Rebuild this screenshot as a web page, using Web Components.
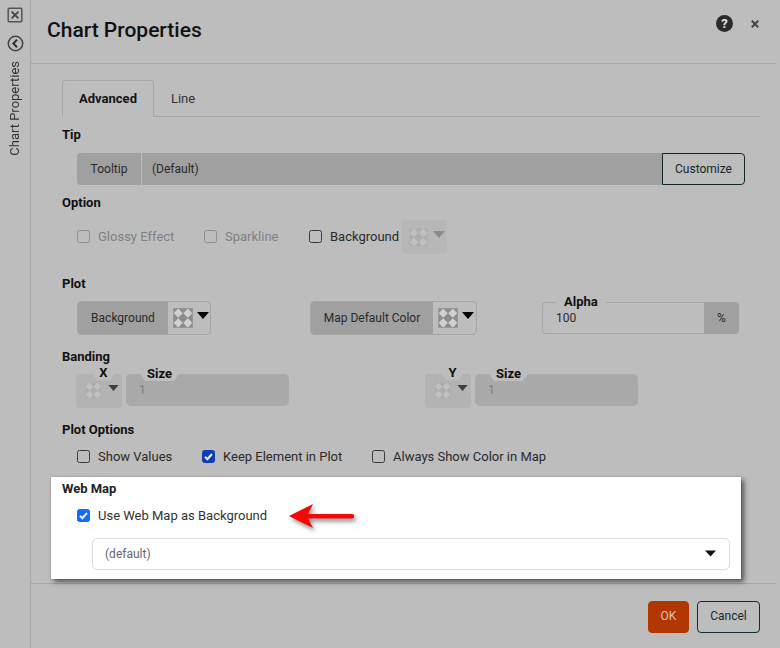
<!DOCTYPE html>
<html><head><meta charset="utf-8"><title>Chart Properties</title>
<style>
html,body{margin:0;padding:0;background:#bdbdbd;overflow:hidden}
body{font:13px Roboto,sans-serif;color:#222;width:780px;height:648px}
</style></head><body>
<x-app>
  <x-sidebar slot="side">Chart Properties</x-sidebar>
  <x-header>Chart Properties</x-header>
  <x-tabs></x-tabs>
  <x-label gap="7">Tip</x-label>
  <x-row gap="9" h="32">
    <x-tipgroup></x-tipgroup>
  </x-row>
  <x-label gap="7">Option</x-label>
  <x-row gap="8" h="34">
    <x-check disabled w="127" style="margin-bottom:2px">Glossy Effect</x-check>
    <x-check disabled w="105" style="margin-bottom:2px">Sparkline</x-check>
    <x-check w="93" style="margin-bottom:2px">Background</x-check>
    <x-swatch disabled></x-swatch>
  </x-row>
  <x-label gap="19">Plot</x-label>
  <x-row gap="8" h="34">
    <x-colorgroup w="134" addon="90">Background</x-colorgroup>
    <x-colorgroup w="167" addon="122" style="margin-left:99px">Map Default Color</x-colorgroup>
    <x-alpha style="margin-left:65px"></x-alpha>
  </x-row>
  <x-label gap="11">Banding</x-label>
  <x-row gap="8" h="34" flush>
    <x-bandswatch>X</x-bandswatch>
    <x-sizefield></x-sizefield>
    <x-bandswatch style="margin-left:136px">Y</x-bandswatch>
    <x-sizefield></x-sizefield>
  </x-row>
  <x-label gap="11">Plot Options</x-label>
  <x-row gap="7" h="20">
    <x-check w="125">Show Values</x-check>
    <x-check checked w="170">Keep Element in Plot</x-check>
    <x-check>Always Show Color in Map</x-check>
  </x-row>
  <x-webmap></x-webmap>
  <x-footer></x-footer>
</x-app>
<script>
const define=(name,css,html,extra)=>{
  customElements.define(name,class extends HTMLElement{
    connectedCallback(){
      if(this.shadowRoot)return;
      const r=this.attachShadow({mode:'open'});
      r.innerHTML='<style>'+css+'</style>'+(typeof html==='function'?html(this):html);
      if(extra)extra(this,r);
    }
  });
};
const checker=(dim,size=20)=>`<svg width="${size}" height="${size}" viewBox="0 0 20 20" style="display:block;flex:none" aria-hidden="true"><rect width="20" height="20" fill="${dim?'#adadad':'#8c8c8c'}"/><g fill="${dim?'#c0c0c0':'#d0d0d0'}"><path d="M5.2.6 9.7 5.2 5.2 9.7.7 5.2zM14.8.6 19.3 5.2 14.8 9.7 10.3 5.2zM5.2 10.3 9.7 14.8 6 19H4.4L.7 14.8zM14.8 10.3 19.3 14.8 15.6 19H14L10.3 14.8z"/></g><rect x=".5" y=".5" width="19" height="19" fill="none" stroke="${dim?'#b3b3b3':'#979797'}"/></svg>`;
const caret=(c,w=12,h=7)=>`<svg width="${w}" height="${h}" viewBox="0 0 12 7" style="display:block" aria-hidden="true"><path d="M0 0H12L6 7z" fill="${c}"/></svg>`;
const notch='clip-path:polygon(0 0,100% 0,100% 50%,calc(100% - 5px) 100%,5px 100%,0 50%);';

define('x-app',`:host{display:flex;width:780px;height:648px}
 .main{flex:1;min-width:0;display:flex;flex-direction:column}`,
 `<slot name="side"></slot><div class="main"><slot></slot></div>`);

define('x-sidebar',`:host{display:flex;flex-direction:column;align-items:center;width:30px;flex:none;border-right:1px solid #a6a6a6;padding-top:7px;box-sizing:content-box;color:#3a3a3a}
 svg{display:block}
 .c{margin-top:12px}
 .t{writing-mode:vertical-rl;transform:rotate(180deg);margin-top:9px;font-size:13px;line-height:16px;color:#333}`,
 `<svg width="16" height="16" viewBox="0 0 16 16" aria-hidden="true"><rect x="1.2" y="1.2" width="13.6" height="13.6" rx="1" fill="none" stroke="#555" stroke-width="1.5"/><path d="M4.6 4.6 11.4 11.4M11.4 4.6 4.6 11.4" stroke="#444" stroke-width="1.7"/></svg>
 <svg class="c" width="17" height="17" viewBox="0 0 17 17" aria-hidden="true"><circle cx="8.5" cy="8.5" r="7.2" fill="none" stroke="#444" stroke-width="1.5"/><path d="M10 4.8 6.4 8.5 10 12.2" fill="none" stroke="#333" stroke-width="2"/></svg>
 <div class="t"><slot></slot></div>`);

define('x-header',`:host{display:flex;align-items:center;height:63px;flex:none;border-bottom:1px solid #a6a6a6;margin-right:4px;padding-left:16px;box-sizing:content-box}
 h1{font:500 21px/1 Roboto,sans-serif;margin:0 0 2px;flex:1;color:#111}
 .tools{display:flex;align-items:center;gap:17px;margin:0 17px 16px 0}
 .help{width:17px;height:17px;margin-right:1px;border-radius:50%;background:#2b2b2b;color:#e6e6e6;font:700 13px/17px Roboto,sans-serif;text-align:center}
 svg{display:block}`,
 `<h1><slot></slot></h1><div class="tools"><div class="help">?</div><svg width="8" height="8" viewBox="0 0 8 8" aria-hidden="true"><path d="M.8.8 7.2 7.2M7.2.8.8 7.2" stroke="#444" stroke-width="2"/></svg></div>`);

define('x-tabs',`:host{display:flex;margin:16px 20px 0 31px;height:37px;box-sizing:border-box;border-bottom:1px solid #a6a6a6;flex:none}
 .t{height:37px;box-sizing:border-box;line-height:37px;text-align:center}
 .a{width:92px;border:1px solid #a6a6a6;border-bottom:1px solid #bdbdbd;border-radius:4px 4px 0 0;font-weight:700;color:#151515;line-height:35px}
 .b{width:58px;color:#333}`,
 `<div class="t a">Advanced</div><div class="t b">Line</div>`);

define('x-label',`:host{display:block;flex:none;height:20px;line-height:22px;font-weight:700;color:#111;margin-left:31px}`,`<slot></slot>`,
 (el)=>{el.style.marginTop=(el.getAttribute('gap')||0)+'px'});

define('x-row',`:host{display:flex;flex:none;align-items:center;padding-left:46px}
 :host([flush]){align-items:flex-start;padding-left:45px}`,`<slot></slot>`,
 (el)=>{el.style.marginTop=el.getAttribute('gap')+'px';el.style.height=el.getAttribute('h')+'px'});

define('x-check',`:host{display:flex;align-items:center;flex:none;color:#2a2a2a;white-space:nowrap}
 .b{width:13px;height:13px;box-sizing:border-box;border:1.5px solid #3a3a3a;border-radius:2.5px;margin-right:8px;flex:none;display:flex;align-items:center;justify-content:center}
 :host([disabled]){color:#7d8284}
 :host([disabled]) .b{border-color:#8f8f8f}
 :host([checked]) .b{background:var(--check,#0b3fb5);border-color:var(--check,#0b3fb5)}
 svg{display:block}`,
 (el)=>`<span class="b">${el.hasAttribute('checked')?'<svg width="11" height="11" viewBox="0 0 11 11" aria-hidden="true"><path d="M2 5.8 4.4 8.2 9 3" fill="none" stroke="#eee" stroke-width="2"/></svg>':''}</span><slot></slot>`,
 (el)=>{const w=el.getAttribute('w');if(w)el.style.width=w+'px'});

define('x-swatch',`:host{display:flex;flex:none;width:45px;height:34px;background:#b7b7b7;border-radius:4px;padding:8px 0 0 7px;box-sizing:border-box}
 .c{margin:3px 0 0 5px}`,
 ()=>`${checker(true,19)}<div class="c">${caret('#8a8a8a')}</div>`);

define('x-tipgroup',`:host{display:flex;width:668px;height:32px;line-height:32px;color:#2a2a2a;font-size:12px}
 .a{width:64px;background:#a0a0a0;border-radius:4px 0 0 4px;text-align:center;margin-right:1px}
 .f{flex:1;background:#a0a0a0;padding-left:10px}
 .b{width:83px;box-sizing:border-box;border:1px solid #0d2a2a;border-radius:0 4px 4px 0;text-align:center;line-height:30px;color:#15282c;background:#bdbdbd}`,
 `<div class="a">Tooltip</div><div class="f">(Default)</div><div class="b">Customize</div>`);

define('x-colorgroup',`:host{display:flex;flex:none;height:34px;box-sizing:border-box;border:1px solid #a6a6a6;border-radius:4px;overflow:hidden;line-height:32px;color:#2a2a2a;font-size:12px}
 .a{background:#a0a0a0;text-align:center;flex:none}
 .s{flex:1;display:flex;padding:6px 0 0 5px;box-sizing:border-box}
 .c{margin:4px 0 0 4px}`,
 (el)=>`<div class="a" style="width:${el.getAttribute('addon')}px"><slot></slot></div><div class="s">${checker(false)}<div class="c">${caret('#000')}</div></div>`,
 (el)=>{el.style.width=el.getAttribute('w')+'px'});

define('x-alpha',`:host{display:flex;position:relative;flex:none;width:197px;height:32px;line-height:30px;color:#2a2a2a;font-size:12px}
 .f{flex:1;border:1px solid #a6a6a6;border-right:0;border-radius:4px 0 0 4px;padding-left:13px;line-height:30px}
 .a{width:35px;flex:none;background:#a0a0a0;border-radius:0 4px 4px 0;text-align:center;line-height:32px}
 .l{position:absolute;left:14px;top:-8px;background:#bdbdbd;padding:0 8px;height:16px;line-height:16px;font-weight:700;color:#111;font-size:13px}`,
 `<div class="f">100</div><div class="a">%</div><div class="l">Alpha</div>`);

define('x-bandswatch',`:host{display:flex;position:relative;flex:none;width:46px;height:34px;background:#b3b3b3;border-radius:4px;padding:8px 0 0 9px;box-sizing:border-box;margin-right:4px}
 .c{margin:3px 0 0 6px}
 .l{position:absolute;left:16px;top:-8px;width:23px;height:14px;line-height:14px;text-align:center;background:#bdbdbd;font-weight:700;color:#111;${notch}}`,
 ()=>`${checker(true,17)}<div class="c">${caret('#3f3f3f',11,6)}</div><div class="l"><slot></slot></div>`);

define('x-sizefield',`:host{display:block;position:relative;flex:none;width:163px;height:32px;background:#a9a9a9;border-radius:5px;box-sizing:border-box;padding-left:13px;line-height:32px;color:#7a8083;font-size:12px}
 .l{position:absolute;left:14px;top:-7px;padding:0 7px;height:14px;line-height:14px;font-weight:700;color:#111;background:#bdbdbd;font-size:13px;${notch}}`,
 `1<div class="l">Size</div>`);

define('x-webmap',`:host{display:block;position:relative;flex:none;margin:11px 0 0 20px;width:690px;height:102px;box-sizing:border-box;background:#fff;box-shadow:3px 3px 5px rgba(0,0,0,.55),0 0 1px rgba(0,0,0,.3);padding-left:11px;--check:#0b6efd}
 .h{font-weight:700;color:#222;height:20px;line-height:24px}
 x-check{position:relative;margin:8px 0 0 15px;height:20px;color:#333}
 .sel{display:flex;align-items:center;justify-content:space-between;margin:13px 0 0 30px;width:638px;height:32px;box-sizing:border-box;border:1px solid #dcdcdc;border-radius:5px;padding:0 13px 1px 12px;color:#63676b;font-size:12px}
 .arrow{position:absolute;left:235px;top:25px;filter:drop-shadow(2px 3px 2px rgba(0,0,0,.45))}
 svg{display:block}`,
 `<div class="h">Web Map</div><x-check checked>Use Web Map as Background</x-check>
 <div class="sel"><span>(default)</span><svg width="11" height="7" viewBox="0 0 11 7" aria-hidden="true"><path d="M0 .5H11L5.5 6.5z" fill="#111"/></svg></div>
 <svg class="arrow" width="70" height="28" viewBox="0 0 70 28" aria-hidden="true"><path d="M3 14 27 2 22 12H66a2.25 2.25 0 0 1 0 4.5H22L27 26z" fill="#fa0505"/></svg>`);

define('x-footer',`:host{display:flex;flex:none;justify-content:flex-end;gap:8px;margin:4px 4px 0 0;padding:17px 16px 0 0;border-top:1px solid #a6a6a6;font-size:12px}
 .b{height:32px;line-height:29px;box-sizing:border-box;border-radius:4px;text-align:center;border:1px solid}
 .ok{width:41px;background:#b23600;border-color:#b23600;color:#d8c4b8}
 .no{width:63px;border-color:#0d2f33;color:#15282c}`,
 `<div class="b ok">OK</div><div class="b no">Cancel</div>`);
</script>
</body></html>
